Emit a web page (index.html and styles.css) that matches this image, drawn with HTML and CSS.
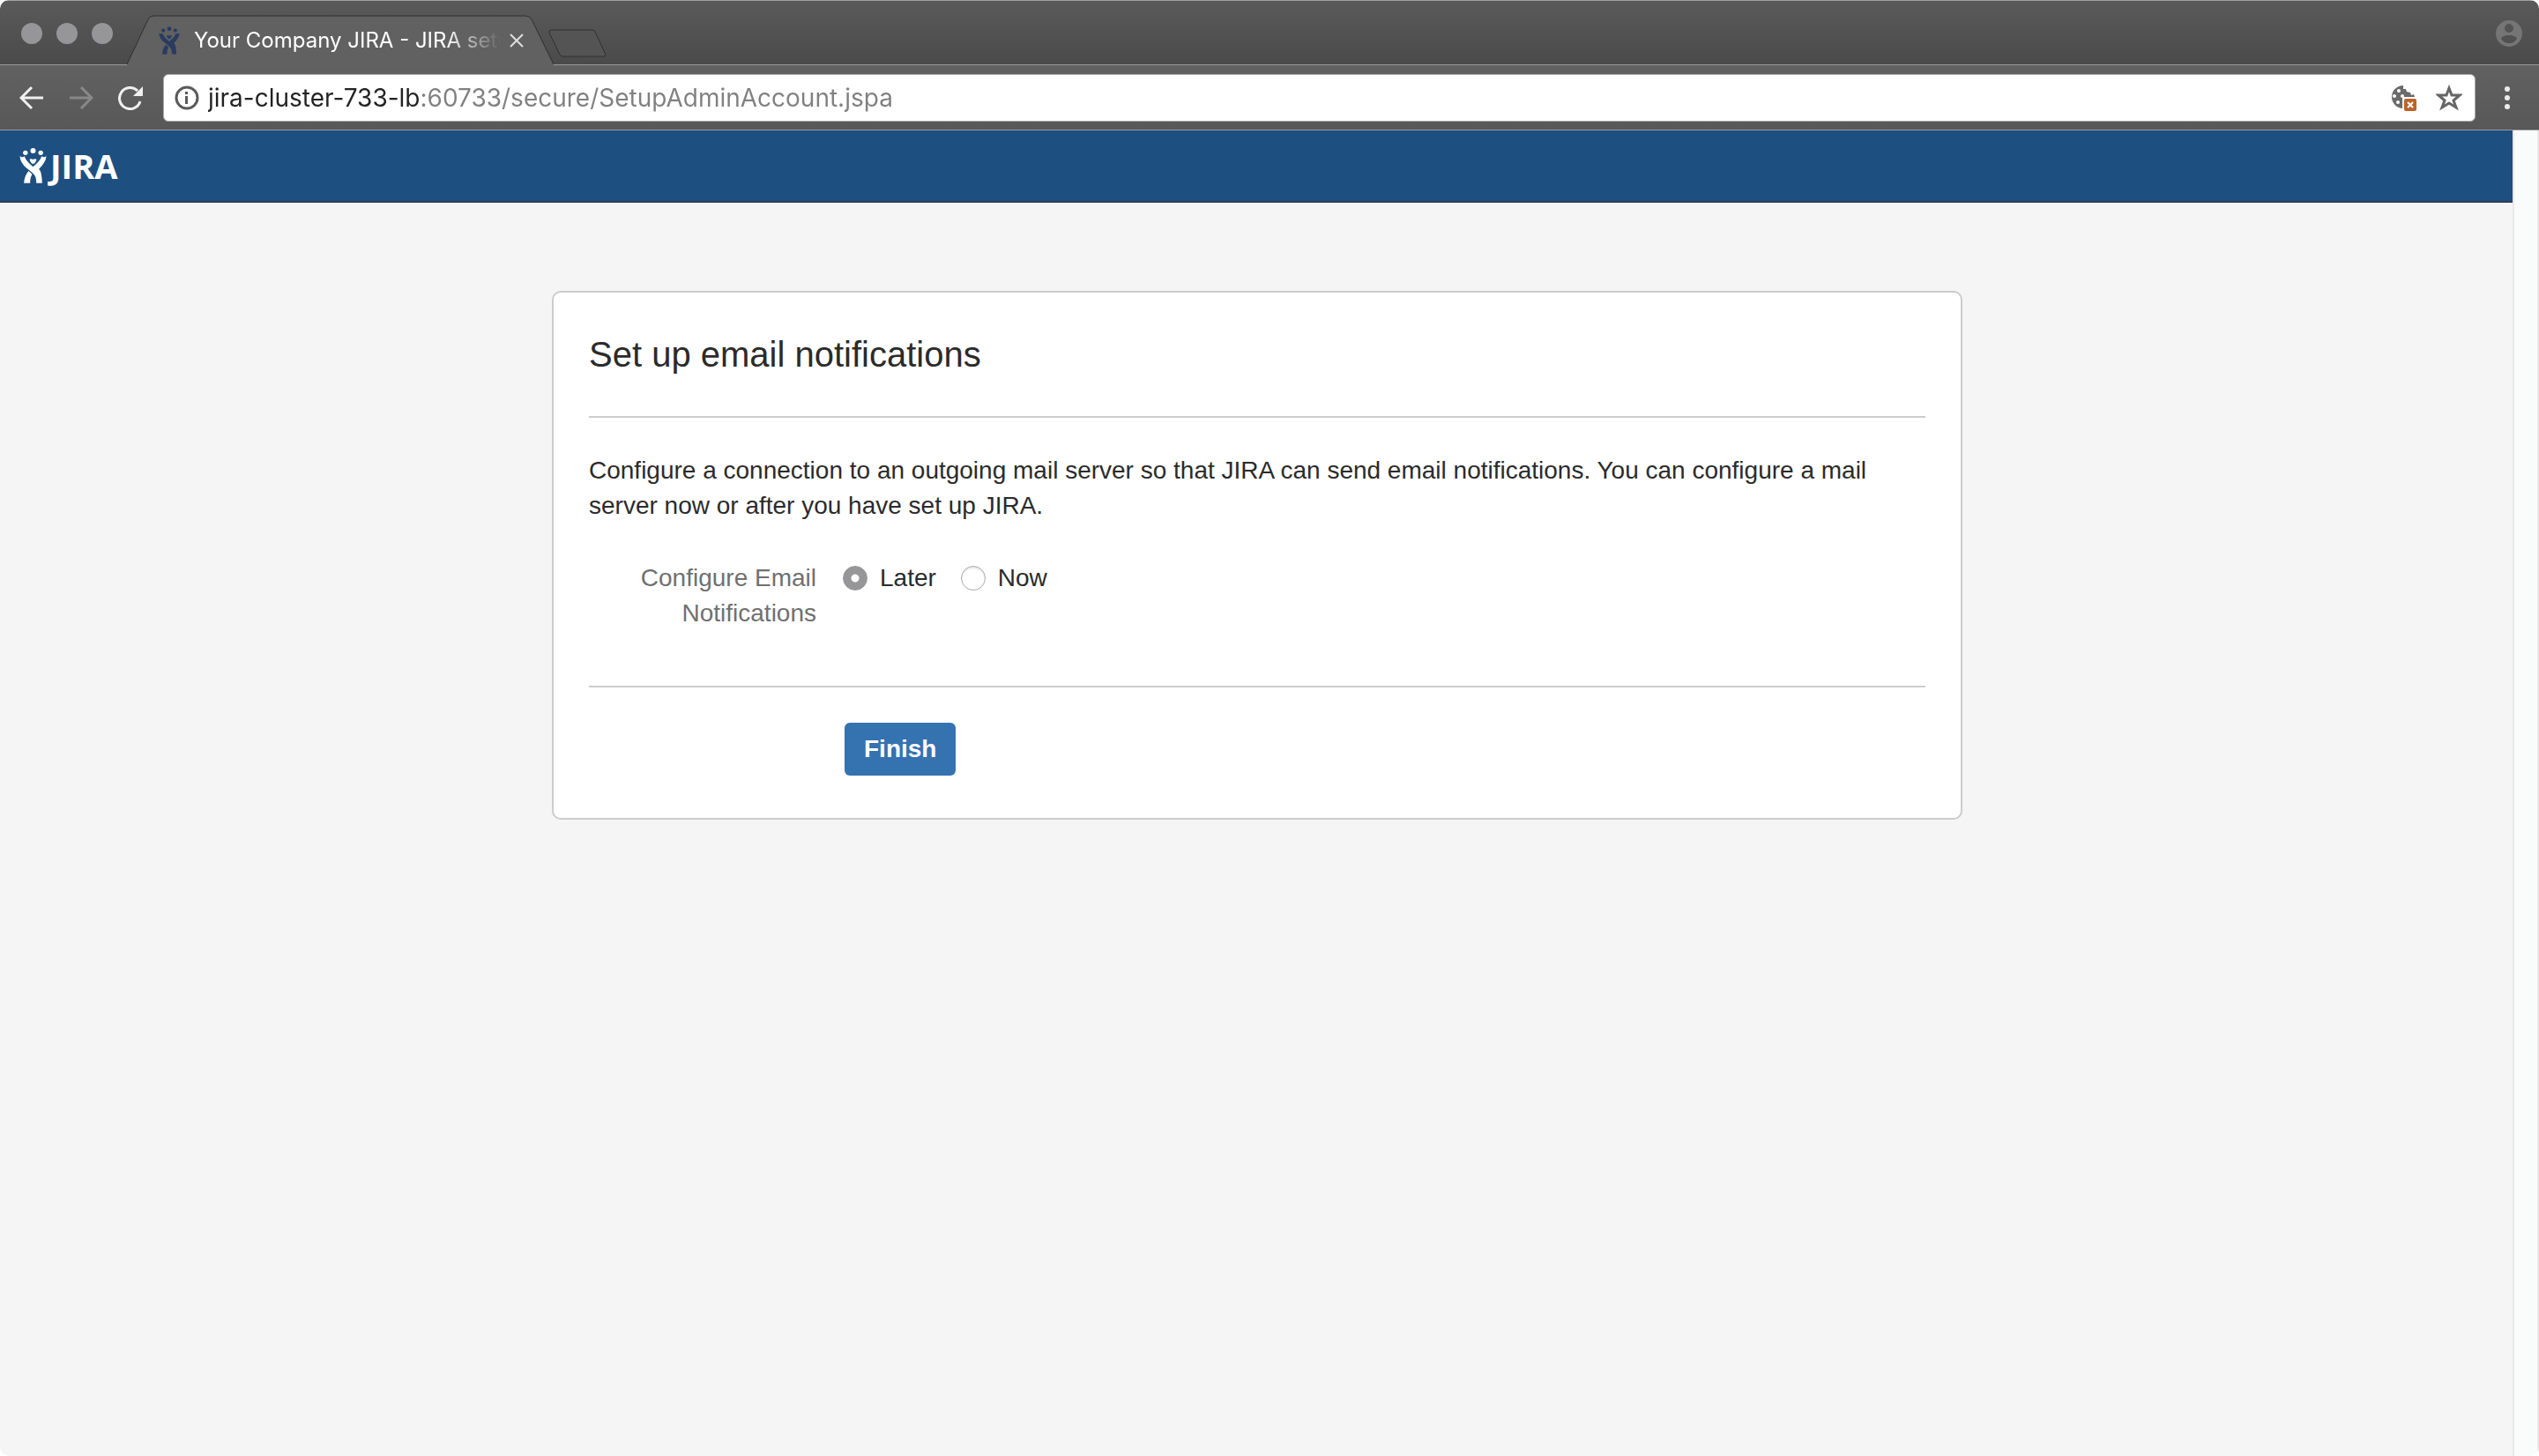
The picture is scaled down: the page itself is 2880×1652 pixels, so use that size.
FILE: index.html
```html
<!DOCTYPE html>
<html lang="en">
<head>
<meta charset="utf-8">
<title>Your Company JIRA - JIRA setup</title>
<link rel="stylesheet" href="styles.css">
</head>
<body>
<svg class="defs" width="0" height="0" aria-hidden="true">
  <symbol id="charlie" viewBox="0 0 92 120">
    <circle cx="20" cy="16" r="8"/><circle cx="46" cy="9" r="9"/><circle cx="72" cy="16" r="8"/>
    <path d="M34 38q6-3 12 1q6-4 12-1q-3 13-12 16q-9-3-12-16z"/>
    <path d="M1 27Q8 34 17 28Q20 42 46 64Q72 42 75 28Q84 34 91 27Q90 48 66 71Q76 80 77 119H57Q58 96 46 86Q37 78 24 68Q2 50 1 27Z"/>
    <path d="M31 78L43 89Q36 99 36 119H15Q17 93 31 78Z"/>
  </symbol>
</svg>
<div class="window">
  <header class="tabstrip">
    <div class="lights"><span></span><span></span><span></span></div>
    <div class="tab">
      <svg class="tab-shape" viewBox="0 0 484 57" width="484" height="57" aria-hidden="true"><path class="tab-fill" d="M0 57L24 5Q26 1 30 1H452Q457 1 459 5L484 57Z"/><path class="tab-line" d="M0 56L24 5Q26 1 30 1H452Q457 1 459 5L484 56"/></svg>
      <svg class="favicon" width="24" height="32"><use href="#charlie"/></svg>
      <span class="tab-title">Your Company JIRA - JIRA setup</span>
      <button class="icon-btn" type="button" aria-label="Close tab"><svg width="16" height="16" viewBox="0 0 16 16"><path d="M1 1L15 15M15 1L1 15" fill="none" stroke="#dedede" stroke-width="2"/></svg></button>
    </div>
    <button class="icon-btn new-tab" type="button" aria-label="New tab"><svg width="66" height="32" viewBox="0 0 66 32"><path d="M3 1H50Q52 1 53 3L65 29Q65 31 63 31H17Q14 31 13 29L1 4Q1 1 3 1Z" fill="#545454" stroke="#303030"/></svg></button>
    <button class="icon-btn profile" type="button" aria-label="Profile"><svg width="32" height="32" viewBox="0 0 32 32"><path fill="#757575" fill-rule="evenodd" d="M16 1a15 15 0 1 1 0 30a15 15 0 0 1 0-30ZM16 5a5 5 0 1 0 0 10a5 5 0 0 0 0-10ZM16 18c-5 0-9 2-9 4c2 3 5 5 9 5s7-2 9-5c0-2-4-4-9-4Z"/></svg></button>
  </header>
  <nav class="toolbar">
    <button class="icon-btn" type="button" aria-label="Back"><svg width="28" height="28" viewBox="0 0 28 28"><path d="M27 14H3M14 2L2 14L14 26" fill="none" stroke="#f0f0f0" stroke-width="3"/></svg></button>
    <button class="icon-btn" type="button" aria-label="Forward"><svg width="28" height="28" viewBox="0 0 28 28"><path d="M1 14H25M14 2L26 14L14 26" fill="none" stroke="#888" stroke-width="3"/></svg></button>
    <button class="icon-btn" type="button" aria-label="Reload"><svg width="28" height="28" viewBox="0 0 28 28"><path d="M25 18A12 12 0 1 1 22 6" fill="none" stroke="#f0f0f0" stroke-width="3"/><path d="M28 1V12H17Z" fill="#f0f0f0"/></svg></button>
    <div class="omnibox">
      <svg width="28" height="28" viewBox="0 0 28 28" aria-hidden="true"><circle cx="14" cy="14" r="12" fill="none" stroke="#5a5a5a" stroke-width="3"/><path d="M12 7h3v3h-3zM12 12h3v9h-3z" fill="#5a5a5a"/></svg>
      <input class="url" type="text" aria-label="Address" spellcheck="false" value="jira-cluster-733-lb:60733/secure/SetupAdminAccount.jspa">
      <button class="icon-btn" type="button" aria-label="Cookies blocked"><svg width="32" height="32" viewBox="0 0 32 32"><path d="M15 2A13 13 0 1 0 15 28L28 15L27 12L24 13L23 10L19 9L18 6H15Z" fill="#6a6a6a"/><g fill="#fff"><circle cx="10" cy="8" r="2"/><circle cx="5" cy="14" r="2"/><circle cx="9" cy="21" r="2"/><circle cx="14" cy="14" r="2"/><path d="M14 15H32V32H14z"/></g><rect x="16" y="17" width="14" height="14" rx="2" fill="#bd6429"/><path d="M20 21L26 27M26 21L20 27" stroke="#fff" stroke-width="2"/></svg></button>
      <button class="icon-btn" type="button" aria-label="Bookmark"><svg width="30" height="30" viewBox="0 0 30 30"><path d="M15 4L18 12L27 12L20 18L23 26L15 21L7 26L10 18L3 12L12 12Z" fill="none" stroke="#666" stroke-width="3"/></svg></button>
    </div>
    <button class="icon-btn menu" type="button" aria-label="Menu"><svg width="8" height="28" viewBox="0 0 8 28" fill="#ececec"><circle cx="4" cy="4" r="3"/><circle cx="4" cy="14" r="3"/><circle cx="4" cy="24" r="3"/></svg></button>
  </nav>
  <div class="viewport">
    <div class="page">
      <header class="app-header">
        <a class="logo" href="#"><svg width="31" height="40" aria-hidden="true"><use href="#charlie"/></svg><span>JIRA</span></a>
      </header>
      <main>
        <form class="card">
          <h1>Set up email notifications</h1>
          <p>Configure a connection to an outgoing mail server so that JIRA can send email notifications. You can configure a mail server now or after you have set up JIRA.</p>
          <div class="field" role="radiogroup" aria-labelledby="email-label">
            <div class="field-label" id="email-label">Configure Email Notifications</div>
            <div class="options">
              <label><input type="radio" name="email" value="later" checked>Later</label>
              <label><input type="radio" name="email" value="now">Now</label>
            </div>
          </div>
          <div class="actions"><button class="primary" type="submit">Finish</button></div>
        </form>
      </main>
    </div>
    <div class="scrollbar"></div>
  </div>
</div>
</body>
</html>
```
FILE: styles.css
```css
* { box-sizing: border-box; }

body {
  margin: 0;
  background: #fff;
  color: #2b2b2b;
  font: 28px/40px "Liberation Sans", Arial, sans-serif;
}

.defs { position: absolute; }
svg { display: block; flex: none; }

.window {
  display: flex;
  flex-direction: column;
  min-height: 100vh;
  border-radius: 10px;
  overflow: hidden;
}

.icon-btn {
  flex: none;
  padding: 0;
  border: 0;
  background: none;
}

/* Tab strip */
.tabstrip {
  display: flex;
  align-items: flex-end;
  height: 74px;
  border-top: 1px solid #a0a0a0;
  background: linear-gradient(#5a5a5a, #4a4a4a);
  box-shadow: inset 0 -1px #999;
}

.lights {
  display: flex;
  gap: 16px;
  padding: 0 16px 24px 24px;
}

.lights span {
  width: 24px;
  height: 24px;
  border-radius: 50%;
  background: #969698;
}

.tab {
  position: relative;
  display: flex;
  align-items: center;
  width: 484px;
  height: 57px;
  padding: 0 34px 0 36px;
}

.tab-shape { position: absolute; inset: 0; }
.tab-fill { fill: #616161; }
.tab-line { fill: none; stroke: #303030; }
.favicon { position: relative; fill: #2a3b60; }

.tab-title {
  position: relative;
  flex: 1;
  margin: 0 10px 0 16px;
  overflow: hidden;
  color: #fff;
  font: 24px/32px Inter, sans-serif;
  white-space: nowrap;
  -webkit-mask-image: linear-gradient(90deg, #000 calc(100% - 64px), transparent);
  mask-image: linear-gradient(90deg, #000 calc(100% - 64px), transparent);
}

.tab .icon-btn { position: relative; }
.new-tab { margin: 0 0 9px -6px; }
.profile { margin: 0 18px 20px auto; }

/* Toolbar */
.toolbar {
  display: flex;
  align-items: center;
  gap: 28px;
  height: 74px;
  padding: 0 32px 0 22px;
  border-bottom: 1px solid #999;
  background: linear-gradient(#616161, #585858);
}

.omnibox {
  display: flex;
  flex: 1;
  align-items: center;
  height: 54px;
  margin-left: -5px;
  padding: 0 14px 0 12px;
  border: 1px solid #a8a8a8;
  border-radius: 6px;
  background: #fff;
}

.url {
  flex: 1;
  min-width: 0;
  height: 40px;
  margin-left: 10px;
  padding: 0;
  border: 0;
  outline: 0;
  background: linear-gradient(90deg, #222 242px, #808080 242px);
  -webkit-background-clip: text;
  background-clip: text;
  color: transparent;
  font: 28px/40px Inter, sans-serif;
}

.omnibox .icon-btn + .icon-btn { margin-left: 20px; }
.menu { margin: 0 0 0 4px; }

/* Web page */
.viewport { display: flex; flex: 1; }

.page {
  flex: 1;
  min-width: 0;
  background: #f5f5f5;
}

.scrollbar {
  flex: none;
  width: 30px;
  border: solid #e8e8e8;
  border-width: 0 2px;
  background: #fafcfc;
}

.app-header {
  display: flex;
  align-items: center;
  height: 82px;
  padding: 0 22px;
  border-bottom: 2px solid #2e3d54;
  background: #1d4f81;
}

.logo {
  display: flex;
  align-items: center;
  gap: 4px;
  color: #fff;
  font: 700 38px/40px "Open Sans", sans-serif;
  text-decoration: none;
}

.logo svg { fill: #fff; }

main { padding: 100px 38px 40px 40px; }

.card {
  max-width: 1600px;
  margin: 0 auto;
  padding: 40px;
  border: 2px solid #ccc;
  border-radius: 10px;
  background: #fff;
}

h1 {
  margin: 0;
  padding: 6px 0 46px;
  border-bottom: 2px solid #ccc;
  font-size: 40px;
  font-weight: 400;
  line-height: 48px;
}

p { margin: 40px 0 42px; }

.field {
  display: flex;
  gap: 30px;
  padding-bottom: 62px;
  border-bottom: 2px solid #ccc;
}

.field-label {
  width: 258px;
  color: #707070;
  text-align: right;
}

.options { display: flex; gap: 28px; }

.options label {
  display: flex;
  align-items: center;
  gap: 14px;
  height: 40px;
}

.options input {
  appearance: none;
  width: 28px;
  height: 28px;
  margin: 0;
  border: 1px solid #aaa;
  border-radius: 50%;
  background: #fff;
  box-shadow: inset 0 2px 2px #e8e8e8;
}

.options input:checked {
  border-color: #969698;
  background: radial-gradient(circle, #fff 4px, #969698 5px);
  box-shadow: none;
}

.actions {
  display: flex;
  padding: 40px 0 8px 290px;
}

.primary {
  height: 60px;
  padding: 0 22px;
  border: 0;
  border-radius: 6px;
  background: #3572b0;
  color: #fff;
  font: bold 28px/40px "Liberation Sans", Arial, sans-serif;
}
```
